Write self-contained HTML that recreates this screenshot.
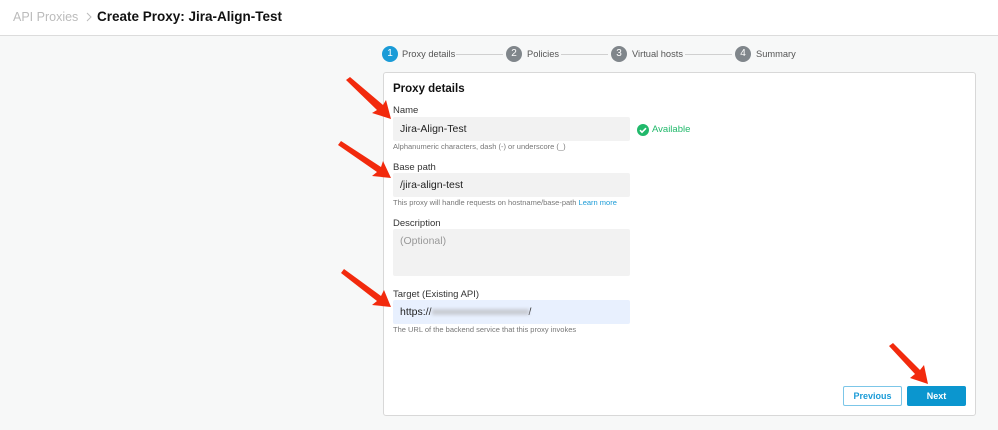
<!DOCTYPE html>
<html><head><style>
*{margin:0;padding:0;box-sizing:border-box}
body{width:998px;height:430px;background:#f7f8f8;font-family:"Liberation Sans",sans-serif;position:relative;overflow:hidden;color:#222}
.a{position:absolute;white-space:nowrap}
.hdr{position:absolute;left:0;top:0;width:998px;height:36px;background:#fff;border-bottom:1px solid #dcdcdc}
.c{position:absolute;width:16px;height:16px;border-radius:50%;color:#fff;font-size:10px;text-align:center;line-height:16px;top:46px;background:#80868b}
.st{font-size:9.3px;color:#555;top:49px}
.ln{position:absolute;top:54px;height:1px;background:#d0d0d0}
.card{position:absolute;left:383px;top:72px;width:593px;height:344px;background:#fff;border:1px solid #d8d8d8;border-radius:3px}
.lbl{font-size:9.5px;color:#333}
.inp{position:absolute;left:393px;width:237px;background:#f2f2f2;border-radius:2px;font-size:10.5px;padding-left:7px}
.hint{font-size:7.5px;color:#777}
</style></head><body>
<div class="hdr"></div>
<div class="a" style="left:13px;top:10px;font-size:12.5px;color:#bbb">API Proxies</div>
<svg class="a" style="left:86px;top:12px" width="6" height="10"><path d="M1 1l4 4-4 4" stroke="#bbb" fill="none"/></svg>
<div class="a" style="left:97px;top:9px;font-size:13.5px;color:#111;font-weight:bold">Create Proxy: Jira-Align-Test</div>

<div class="c" style="left:382px;background:#1a9bd7">1</div><div class="a st" style="left:402px">Proxy details</div>
<div class="ln" style="left:456px;width:47px"></div>
<div class="c" style="left:506px">2</div><div class="a st" style="left:527px">Policies</div>
<div class="ln" style="left:561px;width:47px"></div>
<div class="c" style="left:611px">3</div><div class="a st" style="left:632px">Virtual hosts</div>
<div class="ln" style="left:685px;width:47px"></div>
<div class="c" style="left:735px">4</div><div class="a st" style="left:756px">Summary</div>

<div class="card"></div>
<div class="a" style="left:393px;top:83px;font-size:11.5px;font-weight:bold;color:#111">Proxy details</div>
<div class="a lbl" style="left:393px;top:105px">Name</div>
<div class="inp" style="top:117px;height:24px;line-height:24px">Jira-Align-Test</div>
<svg class="a" style="left:637px;top:124px" width="12" height="12"><circle cx="6" cy="6" r="6" fill="#21b96b"/><path d="M3 6.2l2 2 4-4" stroke="#fff" stroke-width="1.6" fill="none"/></svg>
<div class="a" style="left:652px;top:124px;font-size:9.5px;color:#21b96b">Available</div>
<div class="a hint" style="left:393px;top:142px">Alphanumeric characters, dash (-) or underscore (_)</div>

<div class="a lbl" style="left:393px;top:162px">Base path</div>
<div class="inp" style="top:173px;height:24px;line-height:24px">/jira-align-test</div>
<div class="a hint" style="left:393px;top:198px">This proxy will handle requests on hostname/base-path <span style="color:#1a9bd7">Learn more</span></div>

<div class="a lbl" style="left:393px;top:218px">Description</div>
<div class="inp" style="top:229px;height:47px;padding-top:6px;color:#999">(Optional)</div>

<div class="a lbl" style="left:393px;top:289px">Target (Existing API)</div>
<div class="inp" style="top:300px;height:24px;line-height:24px;background:#e8f0fe">https://<span style="display:inline-block;width:97px;height:6px;background:#c9ccd4;vertical-align:middle;filter:blur(1.5px)"></span>/</div>
<div class="a hint" style="left:393px;top:325px">The URL of the backend service that this proxy invokes</div>

<div class="a" style="left:843px;top:386px;width:59px;height:20px;border:1px solid #7cc6e8;border-radius:2px;color:#1a9bd7;font-size:9px;font-weight:bold;text-align:center;line-height:18px">Previous</div>
<div class="a" style="left:907px;top:386px;width:59px;height:20px;background:#0b96cf;border-radius:2px;color:#fff;font-size:9px;font-weight:bold;text-align:center;line-height:20px">Next</div>

<svg class="a" style="left:0;top:0" width="998" height="430">
<g fill="#f22a0d">
<polygon points="346,80 350,77 383,105 386,100 391,119 372,113 377,110"/>
<polygon points="338,145 341,141 381,167 383,161 391,178 372,176 377,172"/>
<polygon points="341,273 344,269 381,296 384,290 391,307 372,305 377,301"/>
<polygon points="889,346 893,343 920,370 924,365 928,384 910,378 915,374"/>
</g></svg>
</body></html>
